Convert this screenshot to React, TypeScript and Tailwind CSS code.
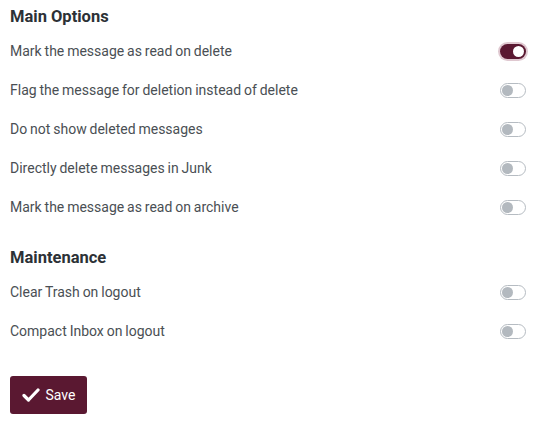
import React from "react";

function Toggle({ on }: { on?: boolean }) {
  if (on) {
    return (
      <div className="w-[30px] h-[19px] rounded-full bg-[#dfc8d0] flex items-center justify-center">
        <div className="w-[26px] h-[15px] rounded-full bg-[#5a1831] flex items-center justify-end pr-[2px]">
          <div className="w-[11px] h-[11px] rounded-full bg-white" />
        </div>
      </div>
    );
  }
  return (
    <div className="w-[30px] h-[19px] flex items-center justify-center">
      <div className="w-[26px] h-[15px] rounded-full border border-[#b6bcc2] bg-white flex items-center pl-[1px]">
        <div className="w-[11px] h-[11px] rounded-full bg-[#b3b9bf]" />
      </div>
    </div>
  );
}

function Row({ label, on }: { label: string; on?: boolean }) {
  return (
    <div className="h-[39px] flex items-center justify-between pr-[11px]">
      <span className="text-[14px] text-[#4a4f54] [word-spacing:-0.6px]">{label}</span>
      <Toggle on={on} />
    </div>
  );
}

export default function App() {
  return (
    <div
      className="w-[539px] h-[430px] bg-white pl-[10px] pt-[7px]"
      style={{ fontFamily: "Roboto, 'Liberation Sans', sans-serif" }}
    >
      <h2 className="text-[16.5px] font-bold text-[#2c3136] leading-[20px] mb-[5px]">Main Options</h2>
      <Row label="Mark the message as read on delete" on />
      <Row label="Flag the message for deletion instead of delete" />
      <Row label="Do not show deleted messages" />
      <Row label="Directly delete messages in Junk" />
      <Row label="Mark the message as read on archive" />
      <h2 className="text-[16.5px] font-bold text-[#2c3136] leading-[20px] mt-[21px] mb-[5px]">Maintenance</h2>
      <Row label="Clear Trash on logout" />
      <Row label="Compact Inbox on logout" />
      <button className="mt-[25px] h-[38px] w-[77px] rounded-[3px] bg-[#5a1831] text-white text-[14px] flex items-center justify-center gap-[6px]">
        <svg width="18" height="14" viewBox="0 0 18 14" fill="none">
          <path d="M2 7.5 L6.5 12 L16 2" stroke="white" strokeWidth="3.2" strokeLinecap="round" strokeLinejoin="round" />
        </svg>
        <span>Save</span>
      </button>
    </div>
  );
}
